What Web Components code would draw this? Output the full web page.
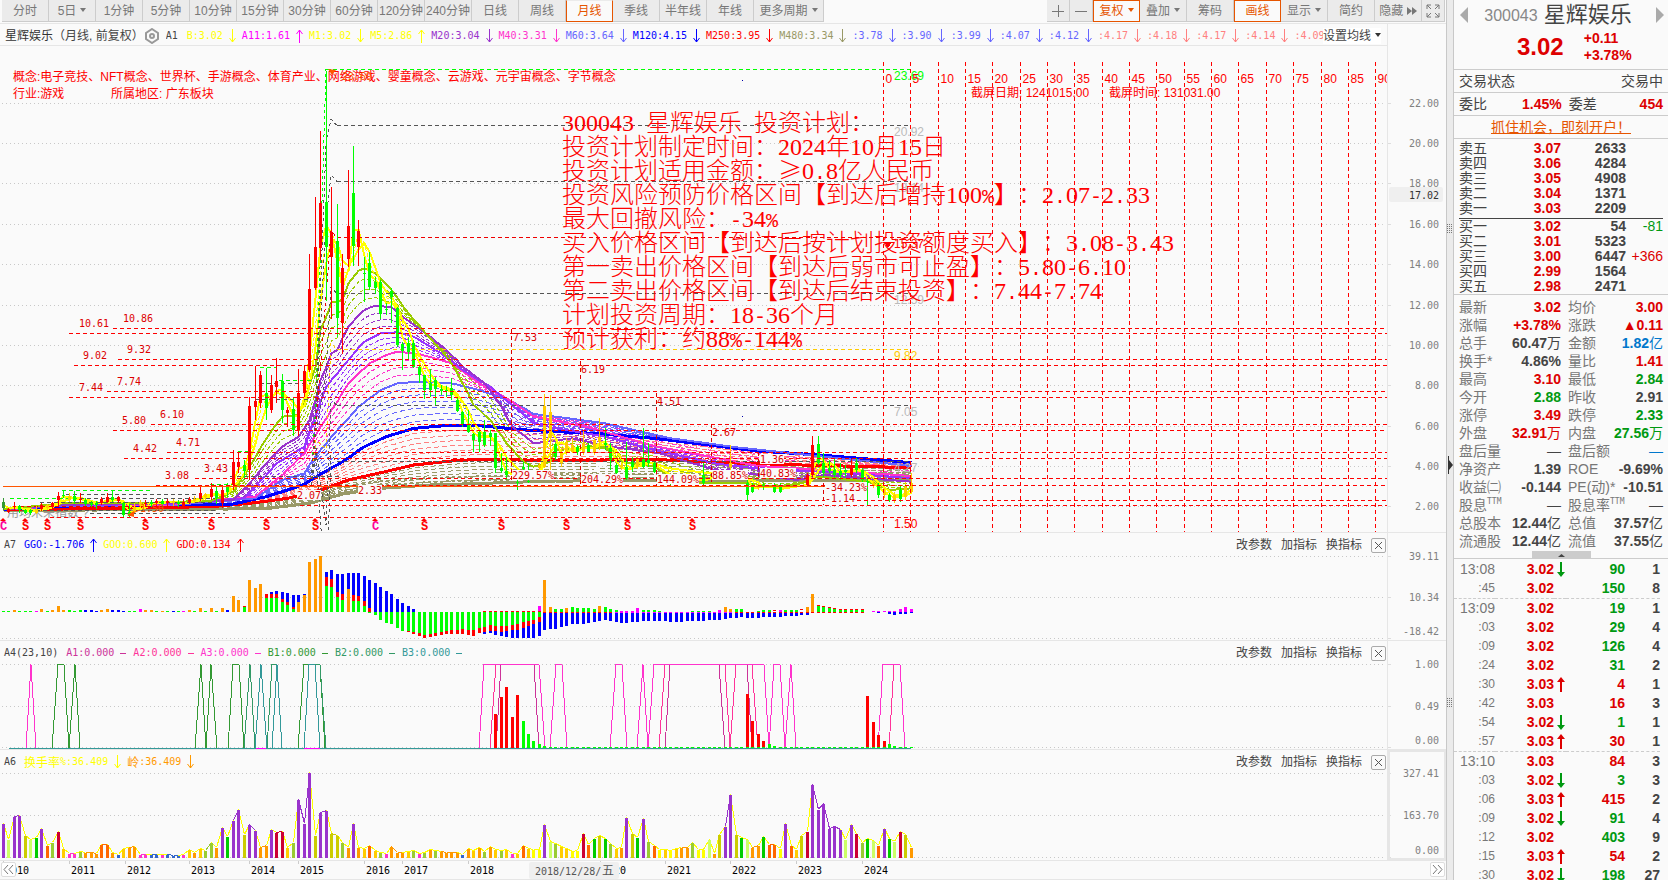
<!DOCTYPE html>
<html lang="zh-CN">
<head>
<meta charset="utf-8">
<title>300043 星辉娱乐</title>
<style>
    html, body {
        margin: 0;
        height: 100%;
    }
    body {
        --line: #e6e6e6;
        --bg: #fafafa;
        --red: #dd0000;
        --green: #009911;
        --accent: #e65500;
        --mono: "DejaVu Sans Mono", "Noto Sans CJK SC", monospace;
        background: var(--bg);
        color: #444;
        font: 12px/16px "Liberation Sans", "Noto Sans CJK SC", sans-serif;
        overflow: hidden;
    }
</style>
</head>
<body>
<trade-screen></trade-screen>
<script>
const STEP = 5.469
const barX = i => Math.round(2 + STEP * i)
const midX = i => barX(i) + 1.5

const line = (x1, y1, x2, y2, color, dash = '', width = 1) =>
    `<line x1="${x1}" y1="${y1}" x2="${x2}" y2="${y2}" stroke="${color}" stroke-width="${width}" stroke-dasharray="${dash}"/>`
const rect = (x, y, w, h, color) => `<rect x="${x}" y="${y}" width="${w}" height="${h}" fill="${color}"/>`
const poly = (points, color, width = 1, dash = '') =>
    `<polyline points="${points.map(p => p.join(',')).join(' ')}" fill="none" stroke="${color}" stroke-width="${width}" stroke-dasharray="${dash}"/>`
const label = (x, y, text, color, cls = 'mono') => `<text x="${x}" y="${y + 4}" fill="${color}" class="${cls}">${text}</text>`
const gridLines = ys => ys.map(y => line(2, y + .5, '99.7%', y + .5, '#c8c8c8', '1 3')).join('')

const ARROWS = {
    up: '<svg width="8" height="14" fill="none" stroke="currentColor"><path d="M4.500 14V1M1.500 5l3-4 3 4"/></svg>',
    down: '<svg width="8" height="14" fill="none" stroke="currentColor"><path d="M4.500 0v13M1.500 9l3 4 3-4"/></svg>',
    flat: '<svg width="8" height="14" fill="none" stroke="currentColor"><path d="M1 7.500h6"/></svg>'
}

const legend = items => items.map(([text, color, dir]) => `<span class="item" style="color:${color}">${text}${ARROWS[dir]}</span>`).join('')

const legendStyles = /*css*/`
    .item {
        display: inline-flex;
        align-items: center;
        gap: 5px;
        margin-right: 6px;
        font: 10px/14px var(--mono);
        white-space: nowrap;
    }
    .item b {
        font: 12px/14px "Noto Sans CJK SC", sans-serif;
        margin-right: -5px;
    }
    .item svg {
        flex: none;
    }
`

const plotStyles = /*css*/`
    text {
        white-space: pre;
    }
    .mono {
        font: 10px var(--mono);
    }
    .sans {
        font: 12px "Liberation Sans", "Noto Sans CJK SC", sans-serif;
    }
    svg {
        display: block;
    }
    button {
        font: inherit;
        color: inherit;
        border: 0;
        padding: 0;
        background: none;
    }
`

class PeriodToolbar extends HTMLElement {
    constructor() {
        super();
        this.attachShadow({ mode: 'open' });
    }

    static get styles() {
        return /*css*/`
        :host{
            display: flex;
            justify-content: space-between;
            height: 23px;
            padding: 0 1px 0 2px;
            border-bottom: 1px solid var(--line);
        }
        .group{
            display: flex;
            height: 22px;
        }
        button{
            box-sizing: border-box;
            width: 47px;
            height: 22px;
            padding: 0;
            border: 0;
            border-right: 1px solid #ccc;
            border-bottom: 1px solid #ccc;
            background: #ebebeb;
            color: #777;
            font: 12px/20px "Liberation Sans", "Noto Sans CJK SC", sans-serif;
            white-space: nowrap;
        }
        .active{
            border: 1px solid var(--accent);
            border-top-color: #ebebeb;
            background: var(--bg);
            color: var(--accent);
        }
        .right .active{
            border-top-color: var(--accent);
        }
        .wide{
            width: 70px;
        }
        .small{
            width: 23px;
        }
        i{
            display: inline-block;
            margin-left: 4px;
            border: 3px solid transparent;
            border-top: 4px solid currentColor;
            border-bottom: 0;
            vertical-align: 3px;
        }
        svg{
            vertical-align: middle;
            fill: none;
            stroke: currentColor;
        }
        `;
    }

    connectedCallback() {
        this.render();
    }

    render() {
        const periods = ['分时', '5日<i></i>', '1分钟', '5分钟', '10分钟', '15分钟', '30分钟', '60分钟', '120分钟', '240分钟', '日线', '周线', '月线', '季线', '半年线', '年线'];
        this.shadowRoot.innerHTML = /*html*/`
        <style>${PeriodToolbar.styles}</style>
        <div class="group">
            ${periods.map(p => `<button class="${p === '月线' ? 'active' : ''}">${p}</button>`).join('')}
            <button class="wide">更多周期<i></i></button>
        </div>
        <div class="group right">
            <button class="small" aria-label="放大"><svg width="12" height="12"><path d="M6.500 0v12M0 6.500h12"/></svg></button>
            <button class="small" aria-label="缩小"><svg width="12" height="12"><path d="M0 6.500h12"/></svg></button>
            <button class="active">复权<i></i></button>
            <button>叠加<i></i></button>
            <button>筹码</button>
            <button class="active">画线</button>
            <button>显示<i></i></button>
            <button>简约</button>
            <button>隐藏 <svg width="10" height="8"><path d="M0 0l5 4-5 4zM5 0l5 4-5 4z" fill="currentColor" stroke="none"/></svg></button>
            <button class="small" aria-label="全屏"><svg width="14" height="14"><path d="M1 5V1h4M9 1h4v4M13 9v4H9M5 13H1V9M1 1l4 4M13 1L9 5M13 13L9 9M1 13l4-4"/></svg></button>
        </div>
        `;
    }
}
customElements.define('period-toolbar', PeriodToolbar);

// Candles: index, colour, then high / body top / body bottom / low in thirds of a pixel below y 50
const CANDLES = `
0 D 1345 1357 1373 1380;1 R 1374 1378 1385 1390;2 R 1355 1368 1372 1380;3 G 1365 1368 1380 1390;4 G 1378 1380 1388 1392;
5 G 1378 1380 1390 1395;6 Y 1368 1378 1390 1393;7 R 1360 1366 1376 1382;8 Y 1362 1366 1374 1380;9 R 1355 1360 1370 1375;
10 R 1325 1338 1350 1372;11 G 1322 1334 1337 1345;12 Y 1330 1338 1350 1356;13 G 1322 1338 1354 1362;14 R 1330 1346 1350 1358;
15 G 1345 1350 1362 1368;16 G 1352 1358 1366 1372;17 G 1352 1360 1366 1376;18 R 1340 1346 1360 1366;19 R 1328 1340 1355 1360;
20 G 1322 1340 1350 1356;21 R 1338 1342 1354 1360;22 G 1355 1360 1395 1400;23 G 1362 1385 1398 1402;24 Y 1360 1370 1384 1390;
25 Y 1350 1356 1366 1372;26 R 1350 1358 1362 1370;27 G 1350 1356 1362 1370;28 R 1346 1352 1360 1368;29 G 1346 1354 1362 1370;
30 R 1346 1352 1360 1368;31 Y 1346 1352 1360 1368;32 G 1350 1356 1362 1370;33 R 1348 1356 1368 1372;34 R 1340 1346 1356 1362;
35 Y 1338 1346 1354 1360;36 R 1308 1330 1344 1352;37 Y 1328 1332 1342 1350;38 R 1300 1318 1340 1350;39 G 1310 1322 1345 1362;
40 R 1310 1320 1360 1374;41 G 1300 1306 1325 1340;42 R 1200 1235 1305 1320;43 R 1210 1235 1250 1270;44 G 1230 1245 1262 1290;
45 R 1042 1068 1260 1290;46 R 948 1052 1070 1110;47 R 963 975 1060 1075;48 G 953 1028 1075 1110;49 R 975 1005 1080 1090;
50 R 925 992 1012 1060;51 G 972 993 1080 1120;52 R 1070 1080 1090 1130;53 G 1045 1077 1140 1158;54 R 957 1028 1140 1158;
55 R 945 963 1028 1040;56 R 612 717 960 965;57 R 441 590 714 720;58 R 243 460 595 630;59 G 62 456 590 752;
60 R 411 546 620 806;61 G 462 573 803 862;62 R 612 654 820 912;63 R 360 528 628 650;64 G 288 430 588 648;
65 R 510 543 590 648;66 G 620 670 673 757;67 G 605 640 712 720;68 G 680 695 715 732;69 G 690 695 792 806;
70 G 760 776 780 795;71 G 715 722 740 820;72 G 772 774 885 890;73 G 875 882 903 960;74 G 860 880 905 928;
75 G 870 880 950 955;76 G 945 950 975 1000;77 G 975 976 1020 1048;78 G 958 1000 1020 1040;79 G 982 990 1018 1066;
80 G 1005 1018 1022 1035;81 G 1008 1020 1024 1040;82 G 985 1014 1035 1050;83 G 1045 1050 1082 1085;84 G 1082 1085 1122 1130;
85 G 1080 1125 1147 1150;86 G 1148 1152 1170 1205;87 G 1140 1145 1175 1205;88 G 1110 1145 1185 1190;89 G 1140 1150 1160 1188;
90 G 1148 1150 1254 1268;91 G 1210 1255 1262 1270;92 G 1220 1262 1275 1290;94 G 1290 1295 1298 1320;95 G 1235 1252 1258 1280;
96 G 1240 1292 1296 1300;98 Y 1240 1246 1254 1258;99 Y 1032 1068 1250 1255;100 Y 1035 1085 1165 1260;101 G 1180 1182 1220 1230;
102 Y 1190 1210 1240 1250;103 Y 1165 1175 1205 1215;104 Y 1165 1185 1205 1210;105 G 1185 1190 1205 1215;106 Y 1140 1180 1205 1215;
107 G 1180 1185 1205 1210;108 Y 1165 1170 1210 1215;109 Y 1105 1160 1175 1200;110 G 1135 1180 1185 1200;111 G 1180 1195 1230 1260;
112 G 1240 1245 1270 1275;113 Y 1240 1246 1252 1260;114 G 1175 1250 1285 1290;115 G 1220 1235 1250 1265;116 Y 1220 1226 1250 1256;
117 G 1135 1225 1250 1255;118 G 1180 1230 1240 1250;119 G 1235 1240 1265 1270;122 G 1290 1295 1300 1305;128 G 1240 1275 1300 1305;
133 Y 1185 1240 1250 1260;136 G 1285 1300 1335 1350;137 G 1300 1305 1325 1330;138 Y 1300 1305 1315 1320;139 G 1300 1304 1308 1320;
141 G 1300 1305 1325 1330;142 G 1300 1310 1325 1330;147 R 1270 1275 1305 1310;148 R 1157 1185 1275 1280;149 G 1157 1182 1238 1245;
150 G 1210 1240 1270 1280;151 G 1230 1255 1262 1270;152 G 1225 1260 1275 1285;153 G 1240 1262 1275 1290;154 G 1245 1260 1266 1280;
155 R 1228 1250 1275 1280;156 G 1225 1240 1260 1270;157 G 1255 1260 1290 1295;158 G 1288 1292 1298 1365;159 Y 1290 1300 1308 1315;
160 G 1300 1305 1335 1345;161 Y 1315 1325 1335 1345;162 G 1330 1336 1350 1355;163 Y 1325 1335 1350 1358;164 G 1305 1320 1348 1355;
165 Y 1295 1310 1340 1350;166 Y 1268 1300 1325 1330
`.trim().split(';').map(row => {
    const [i, color, ...ys] = row.trim().split(' ');
    return { i: +i, color, ys: ys.map(v => Math.round(50 + v / 3)) };
})

const CANDLE_COLORS = { R: '#ff0000', G: '#00ff00', Y: '#ffcc00', D: '#339933' }

const CURVES = [
    { color: '#99cc00', width: 2, at: '0 1378 12 1358 24 1360 38 1352 42 1325 45 1250 48 1165 51 1100 54 1095 55 1060 57 950 58 840 60 758 62 750 63 700 65 662 66 655 68 670 71 720 74 790 78 865 82 940 84 1000 86 1065 89 1110 92 1180 95 1235 97 1250 100 1235 101 1200 106 1195 110 1195 113 1235 119 1250 124 1300 136 1300 141 1310 146 1300 149 1280 158 1295 162 1320 166 1315' },
    { color: '#9933cc', width: 2, at: '0 1378 12 1364 30 1360 42 1350 45 1300 48 1240 51 1190 54 1160 56 1110 58 990 60 910 61 900 63 830 66 780 68 767 71 772 73 800 78 860 82 915 84 950 88 1000 91 1070 93 1130 97 1180 104 1165 111 1190 120 1210 130 1260 136 1270 145 1290 150 1275 158 1285 166 1295' },
    { color: '#9933ff', width: 2, at: '0 1378 12 1365 30 1362 44 1345 50 1240 55 1190 57 1100 59 1010 63 930 66 875 69 850 72 847 75 860 81 920 84 960 89 1010 94 1080 97 1120 101 1135 110 1160 119 1200 130 1240 140 1260 150 1265 166 1285' },
    { color: '#ff33cc', width: 2, at: '0 1378 12 1366 30 1364 46 1340 51 1275 55 1210 58 1130 61 1055 63 1000 67 940 70 915 72 905 76 912 82 940 87 1000 92 1045 97 1100 107 1132 119 1188 138 1248 150 1260 166 1278' },
    { color: '#6666ff', width: 2, at: '0 1378 12 1367 30 1366 46 1345 51 1290 55 1270 57 1220 61 1140 65 1070 69 1020 72 1000 76 995 82 1000 87 1020 93 1055 97 1092 101 1100 110 1120 122 1165 134 1192 150 1220 166 1248' },
    { color: '#0000ff', width: 3, fill: '#ff8080', at: '0 1378 12 1368 42 1362 48 1340 52 1320 55 1303 58 1272 62 1235 66 1190 70 1160 75 1135 80 1128 86 1126 91 1133 97 1142 108 1150 119 1165 130 1187 138 1203 150 1216 166 1238' },
    { color: '#ff0000', width: 3, fill: '#999966', at: '0 1380 38 1370 45 1360 52 1345 58 1320 63 1290 69 1268 75 1245 82 1233 87 1228 101 1232 119 1228 130 1237 146 1245 166 1253' },
    { color: '#999966', width: 3, at: '0 1382 48 1376 56 1360 62 1332 69 1315 78 1305 101 1293 166 1290' }
].map(c => ({ ...c, ys: sampleCurve(c.at.split(' ').map(Number)) }))

function sampleCurve(at) {
    const ys = [];
    for (let i = 0, k = 0; i <= 166; i++) {
        while (i > at[k + 2]) k += 2;
        const t = (i - at[k]) / (at[k + 2] - at[k]);
        ys.push(50 + (at[k + 1] + (at[k + 3] - at[k + 1]) * t) / 3);
    }
    return ys;
}

const trace = (ys, from = 0) => ys.slice(from).map((y, k) => [midX(k + from), y.toFixed(1)])

class MainChart extends HTMLElement {
    constructor() {
        super();
        this.attachShadow({ mode: 'open' });
    }

    static get styles() {
        return /*css*/`
        :host{
            display: grid;
            grid-template-columns: minmax(0, 1fr) 58px;
            min-height: 0;
        }
        .plot{
            display: flex;
            flex-direction: column;
            min-width: 0;
            border-right: 1px solid var(--line);
        }
        .head{
            display: flex;
            align-items: center;
            height: 19px;
            padding: 2px 6px 0 5px;
            border-bottom: 1px solid var(--line);
        }
        .name{
            color: #333;
        }
        .note{
            white-space: nowrap;
        }
        .gear{
            flex: none;
            margin-right: 6px;
        }
        .legend{
            display: flex;
            flex: 1;
            min-width: 0;
            overflow: hidden;
        }
        .legend .item:first-child{
            margin-right: 9px;
        }
        .set{
            flex: none;
            background: #fff;
        }
        .set i{
            display: inline-block;
            margin-left: 4px;
            border: 3px solid transparent;
            border-top: 4px solid #333;
            border-bottom: 0;
            vertical-align: 3px;
        }
        .plan{
            font: 300 24px "Noto Sans CJK SC", sans-serif;
            font-kerning: none;
            text-spacing-trim: space-all;
            fill: #ff0000;
        }
        .plan .digit{
            font: 24px "Liberation Serif", serif;
        }
        .plan .sign{
            font: 20px "Liberation Mono", monospace;
        }
        .mark{
            font: bold 12px "Liberation Mono", monospace;
        }
        ${legendStyles}
        ${plotStyles}
        `;
    }

    connectedCallback() {
        this.render();
    }

    get plan() {
        const rows = [
            '300043 星辉娱乐 投资计划：',
            '投资计划制定时间：2024年10月15日',
            '投资计划适用金额：≥0.8亿人民币',
            '投资风险预防价格区间【到达后增持100%】：2.07-2.33',
            '最大回撤风险：-34%',
            '买入价格区间【到达后按计划投资额度买入】：3.08-3.43',
            '第一卖出价格区间【到达后弱市可止盈】：5.80-6.10',
            '第二卖出价格区间【到达后结束投资】：7.44-7.74',
            '计划投资周期：18-36个月',
            '预计获利：约88%-144%'
        ];
        return rows.map((row, n) =>
            `<text class="plan" x="562" y="${131 + n * 24}">${row.replace(/(\d+)|[ .%-]+/g, (run, digits) => `<tspan class="${digits ? 'digit' : 'sign'}">${run}</tspan>`)}</text>`).join('');
    }

    get averages() {
        let out = '';
        CURVES.forEach((c, k) => {
            const next = CURVES[k + 1];
            if (!next) return;
            const n = k < 4 ? 3 : 6;
            for (let s = 1; s <= n; s++) {
                const t = s / (n + 1);
                const ys = c.ys.map((y, i) => y + (next.ys[i] - y) * t);
                out += poly(trace(ys), c.fill || c.color, 1, k < 4 ? '4 2' : '5 3');
            }
        });
        // thick dashed floor under the long averages
        for (let s = 0; s < 2; s++) {
            out += poly(trace(CURVES[7].ys.map(y => y - 3 - s * 4), 56), '#999966', 2, '3 3');
        }
        [...CURVES].reverse().forEach(c => out += poly(trace(c.ys), c.color, c.width));
        return out;
    }

    get priceLines() {
        const mids = CANDLES.map(c => [c.i, (c.ys[1] + c.ys[2]) / 2]);
        const smooth = n => mids.map(([i], k) => {
            const part = mids.slice(Math.max(0, k - n + 1), k + 1);
            return [midX(i), (part.reduce((sum, p) => sum + p[1], 0) / part.length).toFixed(1)];
        });
        return poly(smooth(4), '#ffff00', 2) + poly(smooth(3), '#ffff00', 1, '4 2') + poly(smooth(2), '#ffff00', 2);
    }

    get candles() {
        return CANDLES.map(({ i, color, ys: [high, top, bottom, low] }) => {
            const fill = CANDLE_COLORS[color];
            return rect(barX(i) + 1, high, 1, low - high, fill) + rect(barX(i), top, 3, Math.max(1, bottom - top), fill);
        }).join('');
    }

    get levels() {
        const red = '#ff0000';
        const rows = [
            [328, 113], [333, 69], [359, 118], [365, 74], [391, 107], [397, 69], [424, 151], [430, 113],
            [452, 167], [458, 124], [478, 195], [485, 156], [500, 325], [505, 300]
        ];
        let out = rows.map(([y, x]) => line(x, y + .5, '100%', y + .5, red, '4 3')).join('');
        out += line(50, 517.5, 911, 517.5, red, '4 3');
        for (let x = 883.500, n = 0; n < 19; n++, x += 5 * STEP) {
            const cx = Math.floor(x) + .5;
            out += line(cx, 62, cx, 532, red, '4 3') + label(cx + 2, 79, n * 5, red, 'sans');
        }
        return out;
    }

    get quantiles() {
        const rows = [
            [69, '#00ff00', '23.69', '#00ff00'], [125, '#555', '20.92', '#bbb'], [181, '#555', '18.14', '#bbb'],
            [237, '#ee0000', '15.37', '#ff0000'], [293, '#555', '12.59', '#bbb'], [349, '#ffcc00', '9.82', '#ffcc00'],
            [405, '#555', '7.05', '#bbb'], [461, '#555', '4.27', '#bbb']
        ];
        let out = rows.map(([y, color, text, ink], n) => {
            const x = n ? 337 : 326;
            const rise = [[311, 485], [316, 400 + n * 8], [326, y + 20 * n], [331, y - (n ? 6 : 0)], [x, y + .5]];
            return line(x, y + .5, 911, y + .5, color, '4 3') + poly(rise, color, 1, '3 3') + label(894, y + 7, text, ink, 'sans');
        }).join('');
        // early steps of the same bands
        [[490, 62, 150, '#00ff00'], [494, 66, 200, '#555'], [498, 10, 160, '#00ff00'], [498, 80, 215, '#555'],
            [502, 40, 215, '#555'], [506, 20, 200, '#ee0000'], [510, 22, 215, '#555'], [513, 90, 225, '#555'],
            [380, 279, 311, '#00ff00'], [367, 260, 277, '#00ff00'], [383, 260, 311, '#555'], [399, 255, 311, '#555'],
            [484, 210, 232, '#00ff00'], [451, 238, 252, '#00ff00'], [476, 230, 340, '#555']]
            .forEach(([y, x1, x2, color]) => out += line(x1, y + .5, x2, y + .5, color, '4 3'));
        return out + label(894, 524, '1.50', '#ff0000', 'sans') + '<path d="M884 242h8l-4 6z" fill="#f00"/>';
    }

    get labels() {
        const red = '#dd0000';
        let out = [
            [79, 323, '10.61'], [123, 318, '10.86'], [83, 355, '9.02'], [127, 349, '9.32'], [79, 387, '7.44'], [117, 381, '7.74'],
            [122, 420, '5.80'], [160, 414, '6.10'], [133, 448, '4.42'], [176, 442, '4.71'], [165, 475, '3.08'], [204, 468, '3.43'],
            [513, 337, '7.53'], [581, 369, '6.19'], [657, 401, '4.51'], [712, 432, '2.67']
        ].map(([x, y, text]) => label(x, y, text, red)).join('');
        out += [[511, 329, 481], [580, 361, 486], [656, 393, 486], [711, 424, 482], [758, 452, 480], [823, 483, 505]]
            .map(([x, y1, y2]) => line(x + .5, y1, x + .5, y2, red, '4 3')).join('');
        out += [
            [297, 495, '2.07'], [358, 490, '2.33'], [512, 475, '229.57%'], [581, 479, '204.29%'], [657, 479, '144.09%'],
            [712, 475, '88.85%'], [760, 459, '1.36'], [760, 473, '40.83%'], [825, 487, '-34.23%'], [825, 498, '-1.14']
        ].map(([x, y, text]) => rect(x, y - 5, text.length * 6, 10, '#fafafa') + label(x, y, text, red)).join('');
        return out;
    }

    get marks() {
        const xs = [3, 25, 47, 80, 145, 211, 266, 315, 375, 424, 501, 566, 627, 692];
        return xs.map(x => {
            const c = x === 3 || x === 375;
            const color = c ? '#ff0099' : '#ff0000';
            return `<path d="M${x - 3} 521l3-3 3 3z" fill="#f00"/>` + `<text class="mark" x="${x - 3}" y="530" fill="${color}">${c ? 'C' : 'S'}</text>`;
        }).join('');
    }

    render() {
        const grid = [103, 143, 183, 224, 264, 305, 345, 385, 426, 466, 506];
        const items = [
            ['B:3.02', '#ffff00', 'down'], ['A11:1.61', '#ff00ff', 'up'], ['M1:3.02', '#ffff00', 'down'], ['M5:2.86', '#ffff00', 'up'],
            ['M20:3.04', '#9933cc', 'down'], ['M40:3.31', '#ff33cc', 'down'], ['M60:3.64', '#6666ff', 'down'],
            ['M120:4.15', '#0000ff', 'down'], ['M250:3.95', '#ff0000', 'down'], ['M480:3.34', '#999966', 'down'],
            [':3.78', '#6666ff', 'down'], [':3.90', '#6666ff', 'down'], [':3.99', '#6666ff', 'down'], [':4.07', '#6666ff', 'down'],
            [':4.12', '#6666ff', 'down'], [':4.17', '#ff8080', 'down'], [':4.18', '#ff8080', 'down'], [':4.17', '#ff8080', 'down'],
            [':4.14', '#ff8080', 'down'], [':4.09', '#ff8080', 'down']
        ];
        this.shadowRoot.innerHTML = /*html*/`
        <style>${MainChart.styles}</style>
        <div class="plot">
            <div class="head">
                <span class="name">星辉娱乐</span>
                <span class="note">（月线, 前复权）</span>
                <svg class="gear" width="16" height="16" fill="none" stroke="#999" stroke-width="2"><path d="M8 1l6 4v6l-6 4-6-4V5z"/><circle cx="8" cy="8" r="2"/></svg>
                <div class="legend"><span class="item">A1</span>${legend(items)}</div>
                <button class="set">设置均线<i></i></button>
            </div>
            <svg width="100%" height="486"><g transform="translate(0 -46)">
                ${gridLines(grid)}
                ${label(13, 77, '概念:电子竞技、NFT概念、世界杯、手游概念、体育产业、网络游戏、婴童概念、云游戏、元宇宙概念、字节概念', '#ff0000', 'sans')}
                ${label(13, 94, '行业:游戏', '#ff0000', 'sans')}
                ${label(111, 94, '所属地区: 广东板块', '#ff0000', 'sans')}
                ${label(971, 93, '截屏日期: 1241015.00', '#ff0000', 'sans')}
                ${label(1109, 93, '截屏时间: 131031.00', '#ff0000', 'sans')}
                ${label(7, 513, '用均未来指数 ?', '#999', 'sans')}
                <g shape-rendering="crispEdges">
                    ${this.averages}
                    ${this.priceLines}
                    ${this.quantiles}
                    ${this.candles}
                    ${line(3, 486.5, 868, 486.5, '#ff5500')}
                </g>
                ${this.plan}
                <g shape-rendering="crispEdges">${this.levels}</g>
                ${this.labels}
                ${this.marks}
                <path d="M328 69l8 1-4 5zM127 515l7-4v6z" fill="#ff5500"/>
                ${line(130, 514, 140, 510, '#ff5500')}
                ${label(342, 76, '23.69', '#ff5500')}
                ${label(140, 508, '1.50', '#ff5500')}
                ${rect(742, 80, 1, 1, '#0000aa')}${rect(742, 360, 1, 1, '#0000aa')}${rect(742, 416, 1, 1, '#0000aa')}
            </g></svg>
        </div>
        <svg width="58" height="508"><g transform="translate(0 -24)">
            <rect x="1" y="187" width="54" height="15" rx="2" fill="#efefef"/>
            ${grid.map((y, n) => line(0, y + .5, 3, y + .5, '#ddd') + label(n < 7 ? 21 : 27, y, (22 - n * 2).toFixed(2), '#808080')).join('')}
            ${label(21, 195, '17.02', '#333')}
        </g></svg>
        `;
    }
}
customElements.define('main-chart', MainChart);

// "i:h" pairs, h counted in pixels from the zero line
const pairs = text => text.split(' ').map(p => p.split(':').map(Number))

function oscillator() {
    const zero = 612;
    const up = (text, color) => pairs(text).map(([i, h]) => rect(barX(i), zero - h, 3, h, color)).join('');
    const down = (text, color) => pairs(text).map(([i, h]) => rect(barX(i), zero, 3, h, color)).join('');
    const run = (from, values) => values.map((v, k) => `${from + k}:${v}`).join(' ');
    let out = '';
    for (let i = 0; i < 42; i++) out += rect(barX(i), zero - 1, 3, 1, '#00ff00');
    out += up('49:20 50:21 51:20 52:19 53:17 54:17 55:18 59:40 60:42 61:38 62:38 63:39 64:39 65:39 66:36 67:32 68:29 69:25 70:21 71:18 72:13 73:9 74:6 75:3', '#0000ff');
    out += up('15:2 16:2 17:1 20:2 21:2 22:1 31:1 41:2', '#0000ff');
    out += up('44:6 48:18 49:18 50:18 51:13 52:10 53:5 59:35 60:33 61:20 62:18 64:17 65:16 66:11 67:4', '#ff0000');
    out += up('12:2 14:2 44:5 48:14 49:14 50:14 51:10 52:7 53:3 59:26 60:25 61:15 62:12 64:11 65:11 66:6', '#00ff00');
    out += up('2:2 7:3 9:2 10:6 11:2 18:2 19:3 26:2 27:2 29:1 34:2 36:4 38:4 40:4 42:16 43:12 45:32 46:24 47:28 54:10 55:17 56:50 57:53 58:56 63:23 99:32 100:5 103:4 109:6 132:5 133:3 147:5 148:18', '#ff9900');
    out += up('6:1 25:3 33:1 98:6 112:1 113:1 114:1 115:1 116:4 131:2 142:2 159:1 160:1 161:1 162:1 163:1 164:3 165:5 166:3', '#ff00ff');
    out += up('101:3 102:3 104:5 105:4 106:4 107:4 108:3 110:5 111:3 112:2 117:2 118:2 119:2 120:1 126:1 127:1 128:1 129:1 134:3 135:3 138:1 139:2 140:2 143:2 144:2 145:2 149:7 150:6 151:5 152:4 153:3 154:3 155:3 156:3 157:2', '#00ff00');
    out += pairs('141:2 146:3 149:7 150:6 151:5 152:4 153:3 154:3 155:3 156:3 157:3').map(([i, h]) => rect(barX(i), zero - h, 3, 1, '#ff0000')).join('');
    out += down(run(88, [22, 21, 23, 24, 25, 26, 26, 26, 26, 26, 24, 18, 17, 17, 15, 14, 12, 12, 12, 11, 10, 9, 8, 9, 10, 11, 11, 10, 10, 9, 9, 9, 9, 9, 10, 10, 10, 9, 9, 9, 9, 8, 8, 8, 7, 6, 6, 5, 6, 6, 6, 5, 5, 5, 5, 4, 4, 4, 3, 3]), '#0000ff');
    out += down('160:1 162:2 163:3 164:2 165:2 166:1', '#0000ff');
    out += down(run(74, [20, 22, 24, 26, 25, 24, 23, 22, 22, 22, 22, 23, 24, 21, 20, 19, 19, 20, 19, 18, 18, 16, 14, 12, 10]), '#ff0000');
    out += down(run(67, [1, 3, 8, 11, 12, 16, 19, 19, 20, 21, 23, 22, 21, 20, 19, 18, 18, 17, 18, 18, 16, 15, 13, 14, 14, 14, 13, 12, 10, 9, 8, 5]), '#00ff00');
    for (let i = 88; i < 158; i++) {
        const top = i < 99 ? zero - 1 : zero;
        out += rect(barX(i), top, 3, 1, i > 111 && i < 134 ? '#ff00ff' : '#ff0000');
    }
    return out;
}

function signals() {
    const top = 664.5, base = 748.5;
    const pulse = (color, a, b, c, d) => poly([[a, base], [b, top], [c, top], [d, base]], color);
    const pink = '#ff33cc', rose = '#ff3399', plum = '#cc3399', green = '#339933', sea = '#339966', teal = '#339999';
    let out = [
        [pink, 26, 31, 31, 36], [green, 52, 58, 64, 69], [green, 69, 75, 75, 80], [green, 195, 201, 201, 206], [green, 206, 211, 211, 217],
        [green, 228, 233, 239, 244], [sea, 244, 250, 250, 255], [sea, 267, 272, 277, 282], [teal, 255, 261, 261, 267], [teal, 272, 277, 277, 282],
        [green, 298, 304, 320, 325], [sea, 304, 309, 320, 326], [teal, 304, 309, 315, 320],
        [rose, 490, 496, 539, 545], [plum, 496, 501, 534, 539], [pink, 479, 484, 539, 545],
        [pink, 550, 556, 562, 567], [pink, 610, 616, 622, 627], [pink, 637, 643, 643, 648],
        [rose, 659, 665, 725, 730], [plum, 665, 670, 719, 725], [rose, 730, 736, 752, 758],
        [pink, 648, 654, 764, 769], [pink, 769, 774, 780, 785], [pink, 785, 791, 791, 796], [rose, 889, 894, 900, 905], [pink, 878, 883, 900, 905]
    ].map(p => pulse(...p)).join('');
    out += line(747, top, 752, base, plum);
    const bars = (text, color) => pairs(text).map(([i, h]) => rect(barX(i), 748 - h, 3, h, color)).join('');
    out += bars('90:34 91:51 92:61 93:31 94:53 136:54 137:27 138:14 139:7 158:52 159:26 160:13 161:7', '#ff0000');
    out += bars('95:27 96:14 97:7 98:4 99:2 140:4 141:2 162:4 163:2', '#00ff00');
    for (let i = 100; i <= 166; i++) out += rect(barX(i), 747, 3, 1, '#00ff00');
    return out + line(9, 748.5, 911, 748.5, '#339999') + line(256, 748.5, 266, 748.5, '#ff00ff') + line(304, 748.5, 320, 748.5, '#ff00ff');
}

const TURNOVER = 'P34 L18 P41 P42 a22 L18 G20 P29 O12 k15 r26 s9 m4 m4 k6 o5 o5 o4 O13 O13 o5 b3 s9 o10 o11 m3 m3 b3 b3 m3 b3 b2 b2 m3 s8 o5 s9 k7 k15 o10 P30 G21 P37 P48 a23 P33 P27 o10 o12 P28 r25 r26 s10 k15 P58 P34 P85 a22 P45 P47 a24 a22 k15 o10 P34 o10 s9 O12 s7 k5 m4 o11 o5 o5 s6 k7 m4 k5 o8 k7 o6 o5 o5 o5 b3 o9 s7 o10 k6 o11 s8 k7 s8 m4 s4 O12 s9 y8 y8 P33 L16 k14 s11 s9 y6 y7 r24 O13 G19 a22 G19 k14 s9 o10 P40 a24 G20 P39 k16 O12 y8 s8 y7 s9 o10 o10 k15 y8 y8 L18 o4 a23 P31 P63 a23 G20 L18 o10 o12 G21 O13 O13 y9 P34 O12 s8 a22 r26 P73 P48 P54 P29 P31 P28 L18 P33 r24 k15 G19 L17 O12 P29 G19 L16 r26 a23 o10'
const TURNOVER_COLORS = { P: '#9933cc', L: '#ccff66', a: '#cccc00', G: '#00cc00', O: '#ff6600', k: '#99cc33', r: '#cc0033', s: '#ffcc00', m: '#ff33cc', o: '#ff9900', b: '#3366cc', y: '#ffff00' }

function turnover() {
    const rows = TURNOVER.split(' ').map(v => [v[0], +v.slice(1)]);
    const pts = rows.map(([, h], i) => [midX(i), 857.5 - h]);
    let out = '';
    rows.forEach(([c], i) => {
        if (!i) return;
        const same = c === rows[i - 1][0] && c !== 's';
        out += poly([pts[i - 1], pts[i]], same ? TURNOVER_COLORS[c] : '#ffff00');
    });
    return out + rows.map(([c, h], i) => rect(barX(i), 858 - h, 3, h, TURNOVER_COLORS[c])).join('');
}

const SUB_CHARTS = {
    a7: {
        top: 532, height: 107, title: 'A7', grid: [556, 597, 638], draw: oscillator,
        items: [['GGO:-1.706', '#0000ff', 'up'], ['GOO:0.600', '#ffff00', 'up'], ['GDO:0.134', '#ff0000', 'up']],
        axis: [[556, '39.11'], [597, '10.34'], [631, '-18.42']]
    },
    a4: {
        top: 640, height: 108, title: 'A4(23,10)', grid: [664, 706, 747], draw: signals,
        items: [['A1:0.000', '#cc3399', 'flat'], ['A2:0.000', '#ff3399', 'flat'], ['A3:0.000', '#ff33cc', 'flat'],
            ['B1:0.000', '#339933', 'flat'], ['B2:0.000', '#339966', 'flat'], ['B3:0.000', '#339999', 'flat']],
        axis: [[664, '1.00'], [706, '0.49'], [740, '0.00']]
    },
    a6: {
        top: 749, height: 110, title: 'A6', grid: [773, 815, 857], draw: turnover,
        items: [['<b>换手率</b>%:36.409', '#ffff00', 'down'], ['<b>岭</b>:36.409', '#ff9900', 'down']],
        axis: [[773, '327.41'], [815, '163.70'], [850, '0.00']], boxed: true
    }
}

class SubChart extends HTMLElement {
    constructor() {
        super();
        this.attachShadow({ mode: 'open' });
    }

    static get styles() {
        return /*css*/`
        :host{
            display: grid;
            grid-template-columns: minmax(0, 1fr) 58px;
            border-top: 1px solid var(--line);
        }
        .plot{
            border-right: 1px solid var(--line);
            min-width: 0;
        }
        .head{
            display: flex;
            align-items: center;
            height: 20px;
            padding: 2px 1px 0 4px;
        }
        .legend{
            display: flex;
            flex: 1;
        }
        .title{
            font: 10px/14px var(--mono);
            margin-right: 8px;
        }
        .actions{
            display: flex;
            align-items: center;
            gap: 9px;
        }
        .close{
            display: block;
            width: 15px;
            height: 15px;
            border: 1px solid #aaa;
            border-radius: 2px;
        }
        .close svg{
            margin: 3px;
        }
        .boxed{
            outline: 2px solid var(--line);
            outline-offset: -2px;
        }
        ${legendStyles}
        ${plotStyles}
        `;
    }

    connectedCallback() {
        this.render();
    }

    render() {
        const { top, height, title, grid, draw, items, axis, boxed } = SUB_CHARTS[this.getAttribute('kind')];
        this.shadowRoot.innerHTML = /*html*/`
        <style>${SubChart.styles}</style>
        <div class="plot">
            <div class="head">
                <span class="title">${title}</span>
                <div class="legend">${legend(items)}</div>
                <div class="actions">
                    <button>改参数</button>
                    <button>加指标</button>
                    <button>换指标</button>
                    <button class="close" aria-label="关闭"><svg width="7" height="7" stroke="#555"><path d="M0 0l7 7M7 0L0 7"/></svg></button>
                </div>
            </div>
            <svg width="100%" height="${height - 22}" shape-rendering="crispEdges"><g transform="translate(0 ${-top - 23})">
                ${gridLines(grid)}
                ${draw()}
            </g></svg>
        </div>
        <svg class="${boxed ? 'boxed' : ''}" width="58" height="${height}"><g transform="translate(0 ${-top - 1})">
            ${grid.map(y => line(0, y + .5, 3, y + .5, '#ddd')).join('')}
            ${axis.map(([y, text]) => label(51 - text.length * 6, y, text, '#808080')).join('')}
        </g></svg>
        `;
    }
}
customElements.define('sub-chart', SubChart);

class TimeAxis extends HTMLElement {
    constructor() {
        super();
        this.attachShadow({ mode: 'open' });
    }

    static get styles() {
        return /*css*/`
        :host{
            display: flex;
            align-items: center;
            height: 18px;
            border: 1px solid var(--line);
            border-width: 1px 0;
            position: relative;
        }
        ${plotStyles}
        .scale{
            flex: 1;
        }
        .step{
            position: absolute;
            left: 1px;
            top: 1px;
            box-sizing: border-box;
            width: 15px;
            height: 15px;
            border: 1px solid #ddd;
            border-radius: 2px;
            background: #fff;
        }
        .next{
            left: auto;
            right: 1px;
        }
        `;
    }

    connectedCallback() {
        this.render();
    }

    render() {
        const years = [[5, 2010], [71, 2011], [127, 2012], [191, 2013], [251, 2014], [300, 2015], [366, 2016], [404, 2017], [470, 2018], [602, 2020], [667, 2021], [732, 2022], [798, 2023], [864, 2024]];
        this.shadowRoot.innerHTML = /*html*/`
        <style>${TimeAxis.styles}</style>
        <svg class="scale" height="18">
            ${years.map(([x, year]) => line(x - 1.5, 0, x - 1.5, 3, '#ccc') + label(x, 9, year, '#000')).join('')}
            <rect x="529" y="1" width="90" height="17" rx="2" fill="#efefef"/>
            ${label(535, 10, '2018/12/28/', '#555')}
            ${label(602, 10, '五', '#555', 'sans')}
        </svg>
        <button class="step" aria-label="更早"><svg width="13" height="13" fill="none" stroke="#777"><path d="M6 2L2 6.500 6 11M11 2L7 6.500 11 11"/></svg></button>
        <button class="step next" aria-label="更晚"><svg width="13" height="13" fill="none" stroke="#777"><path d="M2 2l4 4.500L2 11M7 2l4 4.500L7 11"/></svg></button>
        `;
    }
}
customElements.define('time-axis', TimeAxis);

class PanelSplitter extends HTMLElement {
    constructor() {
        super();
        this.attachShadow({ mode: 'open' });
    }

    static get styles() {
        return /*css*/`
        :host{
            display: grid;
            grid-template-rows: 456fr 242fr 182fr;
            width: 6px;
            border: 1px solid #c8c8c8;
            border-width: 0 1px;
            background: #ebebeb;
        }
        div{
            display: flex;
            align-items: center;
            justify-content: center;
        }
        .handle, div:last-child{
            align-items: flex-start;
        }
        `;
    }

    connectedCallback() {
        const dots = '<svg width="6" height="9" stroke="#777"><path d="M.5 0v9M2.500 0v9M4.500 0v9" stroke-dasharray="1 1"/></svg>';
        this.shadowRoot.innerHTML = /*html*/`
        <style>${PanelSplitter.styles}</style>
        <div>${dots}</div>
        <div class="handle"><svg width="6" height="18"><path d="M1 0h1v4l4 5-4 5v4H1z" fill="#333"/></svg></div>
        <div>${dots}</div>
        `;
    }
}
customElements.define('panel-splitter', PanelSplitter);

class QuotePanel extends HTMLElement {
    constructor() {
        super();
        this.attachShadow({ mode: 'open' });
    }

    static get styles() {
        return /*css*/`
        :host{
            display: flex;
            flex-direction: column;
            min-height: 0;
            overflow: hidden;
            font-size: 14px;
        }
        .title{
            display: flex;
            align-items: center;
            justify-content: space-between;
            height: 30px;
            padding: 0 4px 0 6px;
        }
        .title button{
            width: 8px;
            height: 16px;
            padding: 0;
            border: 8px solid transparent;
            border-right-color: #aaa;
            border-left: 0;
            background: none;
        }
        .title .next{
            border-right: 0;
            border-left: 8px solid #aaa;
        }
        h1{
            margin: 0 8px 0 0;
            font: 22px/30px "Liberation Sans", "Noto Sans CJK SC", sans-serif;
            white-space: nowrap;
        }
        h1 small{
            font-size: 16px;
            color: #888;
            vertical-align: 1px;
        }
        .price{
            display: flex;
            align-items: center;
            height: 33px;
            padding: 0 0 6px 63px;
            gap: 20px;
            color: var(--red);
            font: bold 14px/17px "Liberation Sans", sans-serif;
        }
        .price strong{
            font-size: 24px;
        }
        .row{
            display: flex;
            justify-content: space-between;
            height: 22px;
            padding: 0 5px;
            line-height: 22px;
            border-top: 1px solid #ccc;
        }
        .row b{
            color: var(--red);
        }
        .row.center{
            justify-content: center;
        }
        .row span:nth-child(3){
            margin-right: 36px;
        }
        .row b:nth-child(2){
            margin-left: 28px;
        }
        a{
            color: var(--accent);
            font-kerning: none;
            text-spacing-trim: space-all;
        }
        table{
            border-collapse: collapse;
            table-layout: fixed;
            width: 100%;
        }
        td, th{
            padding: 0;
            text-align: right;
            font-weight: bold;
            white-space: nowrap;
        }
        th{
            text-align: left;
            font-weight: normal;
        }
        .book{
            padding: 2px 5px 0;
            border-top: 1px solid #ccc;
            border-bottom: 1px solid #ccc;
            line-height: 15px;
        }
        .book tr{
            height: 15px;
        }
        .book table + table{
            margin-top: 2px;
            border-top: 1px solid #444;
        }
        .book td:last-child{
            font-weight: normal;
        }
        .stats{
            padding: 3px 5px 0;
            line-height: 18px;
        }
        .stats th{
            color: #777;
        }
        .stats th:nth-child(3){
            padding-left: 7px;
        }
        .stats i{
            font-style: normal;
            font-weight: normal;
        }
        sup{
            font: 8px/8px var(--mono);
            vertical-align: 6px;
        }
        .fold{
            display: block;
            width: 59px;
            height: 7px;
            margin: 1px auto 0;
            padding: 0;
            border: 0;
            background: #ccc;
            line-height: 0;
        }
        .ticks{
            flex: 1;
            min-height: 0;
            overflow: hidden;
            padding: 1px 8px 0 0;
            border-top: 1px solid #ccc;
            line-height: 19px;
        }
        .ticks td:first-child{
            font-weight: normal;
            color: #777;
            font-size: 12px;
        }
        .ticks .minute td:first-child{
            font-size: 14px;
        }
        .ticks .minute:not(:first-child) td{
            border-top: 1px dashed #ccc;
        }
        .ticks td{
            height: 19px;
        }
        .ticks svg{
            display: block;
            margin-left: 3px;
        }
        .r{ color: var(--red); }
        .g{ color: var(--green); }
        .b{ color: #0077cc; }
        `;
    }

    connectedCallback() {
        this.render();
    }

    book(rows) {
        return `<table><colgroup><col style="width:42px"><col style="width:60px"><col style="width:65px"><col></colgroup>
            ${rows.map(([name, price, size, change = '']) => `<tr><th>${name}</th><td class="r">${price}</td><td>${size}</td><td class="${change[0] === '-' ? 'g' : 'r'}">${change}</td></tr>`).join('')}
        </table>`;
    }

    get stats() {
        const rows = [
            ['最新', '3.02', 'r', '均价', '3.00', 'r'], ['涨幅', '+3.78%', 'r', '涨跌', '▲0.11', 'r'],
            ['总手', '60.47<i>万</i>', '', '金额', '1.82<i>亿</i>', 'b'], ['换手*', '4.86%', '', '量比', '1.41', 'r'],
            ['最高', '3.10', 'r', '最低', '2.84', 'g'], ['今开', '2.88', 'g', '昨收', '2.91', ''],
            ['涨停', '3.49', 'r', '跌停', '2.33', 'g'], ['外盘', '32.91<i>万</i>', 'r', '内盘', '27.56<i>万</i>', 'g'],
            ['盘后量', '<i>—</i>', '', '盘后额', '<i>—</i>', 'b'], ['净资产', '1.39', '', 'ROE', '-9.69%', ''],
            ['收益㈡', '-0.144', '', 'PE(动)*', '-10.51', ''], ['股息<sup>TTM</sup>', '<i>—</i>', '', '股息率<sup>TTM</sup>', '<i>—</i>', ''],
            ['总股本', '12.44<i>亿</i>', '', '总值', '37.57<i>亿</i>', ''], ['流通股', '12.44<i>亿</i>', '', '流值', '37.55<i>亿</i>', '']
        ];
        return rows.map(([a, av, ac, b, bv, bc]) => `<tr><th>${a}</th><td class="${ac}">${av}</td><th>${b}</th><td class="${bc}">${bv}</td></tr>`).join('');
    }

    get ticks() {
        const rows = `13:08 3.02 d g90 1,:45 3.02 - g150 8,13:09 3.02 - g19 1,:03 3.02 - g29 4,:09 3.02 - g126 4,:24 3.02 - g31 2,
            :30 3.03 u r4 1,:42 3.03 - r16 3,:54 3.02 d g1 1,:57 3.03 u r30 1,13:10 3.03 - r84 3,:03 3.02 d g3 3,:06 3.03 u r415 2,
            :09 3.02 d g91 4,:12 3.02 - g403 9,:15 3.03 u r54 2,:30 3.02 d g198 27`.split(',').map(r => r.trim().split(' '));
        const arrow = {
            u: '<svg width="8" height="15" fill="#dd0000"><path d="M4 0l4 5H5v10H3V5H0z"/></svg>',
            d: '<svg width="8" height="15" fill="#009911"><path d="M4 15l4-5H5V0H3v10H0z"/></svg>',
            '-': ''
        };
        return rows.map(([time, price, dir, size, count]) => `<tr class="${time[0] === ':' ? '' : 'minute'}">
            <td>${time}</td><td class="r">${price}</td><td>${arrow[dir]}</td><td class="${size[0]}">${size.slice(1)}</td><td>${count}</td></tr>`).join('');
    }

    render() {
        this.shadowRoot.innerHTML = /*html*/`
        <style>${QuotePanel.styles}</style>
        <div class="title">
            <button aria-label="上一只"></button>
            <h1><small>300043</small> 星辉娱乐</h1>
            <button class="next" aria-label="下一只"></button>
        </div>
        <div class="price"><strong>3.02</strong><span>+0.11<br>+3.78%</span></div>
        <div class="row"><span>交易状态</span><span>交易中</span></div>
        <div class="row"><span>委比</span><b>1.45%</b><span>委差</span><b>454</b></div>
        <div class="row center"><a href="#open">抓住机会，即刻开户！</a></div>
        <div class="book">
            ${this.book([['卖五', '3.07', 2633], ['卖四', '3.06', 4284], ['卖三', '3.05', 4908], ['卖二', '3.04', 1371], ['卖一', '3.03', 2209]])}
            ${this.book([['买一', '3.02', 54, '-81'], ['买二', '3.01', 5323], ['买三', '3.00', 6447, '+366'], ['买四', '2.99', 1564], ['买五', '2.98', 2471]])}
        </div>
        <div class="stats">
            <table><colgroup><col style="width:44px"><col style="width:58px"><col style="width:48px"><col></colgroup>${this.stats}</table>
        </div>
        <button class="fold" aria-label="收起"><svg width="7" height="3"><path d="M0 3l3.500-3L7 3z" fill="#444"/></svg></button>
        <div class="ticks">
            <table><colgroup><col style="width:41px"><col style="width:59px"><col style="width:12px"><col style="width:59px"><col></colgroup>${this.ticks}</table>
        </div>
        `;
    }
}
customElements.define('quote-panel', QuotePanel);

class TradeScreen extends HTMLElement {
    constructor() {
        super();
        this.attachShadow({ mode: 'open' });
    }

    static get styles() {
        return /*css*/`
        :host{
            display: grid;
            grid-template-columns: minmax(0, 1fr) auto 214px;
            height: 100vh;
        }
        main{
            display: flex;
            flex-direction: column;
            min-width: 0;
            min-height: 0;
            overflow: hidden;
        }
        main-chart{
            flex: 1;
        }
        `;
    }

    connectedCallback() {
        this.render();
    }

    render() {
        this.shadowRoot.innerHTML = /*html*/`
        <style>${TradeScreen.styles}</style>
        <main>
            <period-toolbar></period-toolbar>
            <main-chart></main-chart>
            <sub-chart kind="a7"></sub-chart>
            <sub-chart kind="a4"></sub-chart>
            <sub-chart kind="a6"></sub-chart>
            <time-axis></time-axis>
        </main>
        <panel-splitter></panel-splitter>
        <quote-panel></quote-panel>
        `;
    }
}
customElements.define('trade-screen', TradeScreen);
</script>
</body>
</html>
